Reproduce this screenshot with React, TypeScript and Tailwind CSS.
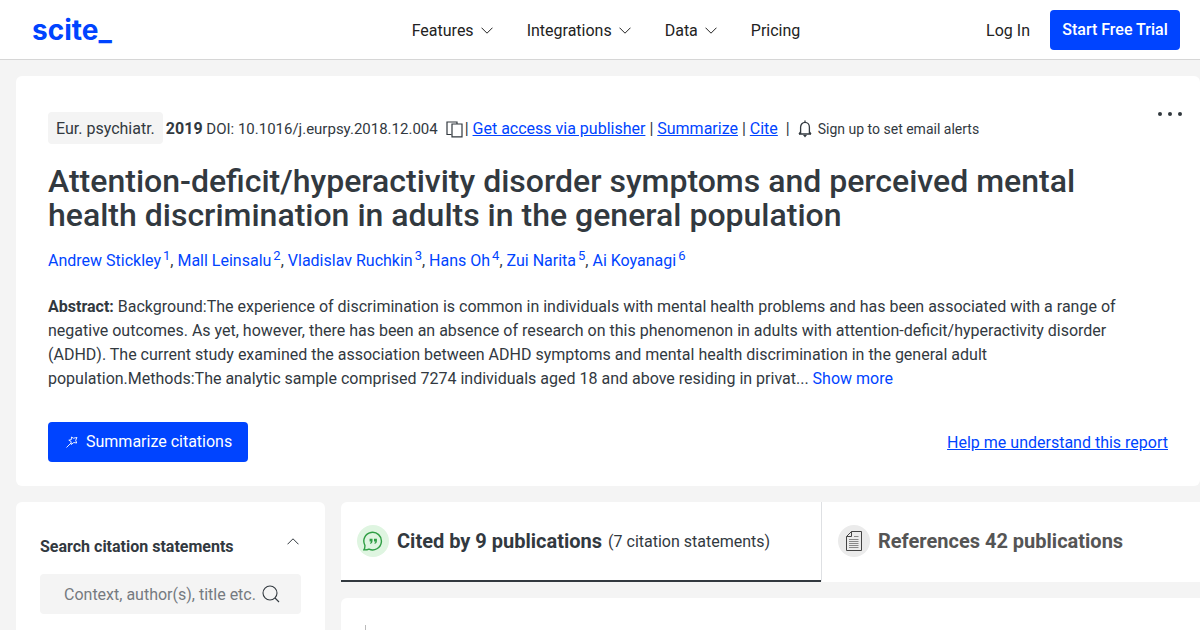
import React from 'react';

interface Author {
  name: string;
  affiliation: number;
}

const authors: Author[] = [
  { name: 'Andrew Stickley', affiliation: 1 },
  { name: 'Mall Leinsalu', affiliation: 2 },
  { name: 'Vladislav Ruchkin', affiliation: 3 },
  { name: 'Hans Oh', affiliation: 4 },
  { name: 'Zui Narita', affiliation: 5 },
  { name: 'Ai Koyanagi', affiliation: 6 },
];

const menus = ['Features', 'Integrations', 'Data'];

const Chevron: React.FC<{ up?: boolean }> = ({ up }) => (
  <svg width="12" height="7" viewBox="0 0 12 7" fill="none" stroke="currentColor" strokeWidth="1">
    <path d={up ? 'M0.5 6.3 6 0.8l5.5 5.5' : 'M0.5 0.7 6 6.2l5.5-5.5'} />
  </svg>
);

const Header: React.FC = () => (
  <header className="flex items-center justify-between h-[60px] pl-8 pr-5 bg-white border-b border-[#d6d6d6] text-[#222]">
    <a href="#" className="flex-1 font-['Inter'] font-bold text-[28px] leading-8 text-[#0044ff]">scite_</a>
    <nav className="flex items-center gap-[34px] pt-0.5">
      {menus.map(menu => (
        <button key={menu} className="flex items-center gap-[7px]">
          {menu}
          <Chevron />
        </button>
      ))}
      <a href="#">Pricing</a>
    </nav>
    <div className="flex flex-1 items-center justify-end gap-5">
      <a href="#" className="pt-0.5">Log In</a>
      <button className="h-10 w-[130px] rounded bg-[#0044ff] text-white font-medium">Start Free Trial</button>
    </div>
  </header>
);

const CopyIcon = () => (
  <svg width="17" height="17" viewBox="0 0 17 17" fill="none" stroke="currentColor" strokeWidth="1.2">
    <path d="M5.5 13.5H1V1h10v2" />
    <path d="M6 3h10v12.9H6z" />
  </svg>
);

const BellIcon = () => (
  <svg width="14" height="18" viewBox="0 0 14 18" fill="none" stroke="currentColor" strokeWidth="1.3">
    <path d="M1 14h12M2.6 14V7.2C2.6 4.5 4.5 2.3 7 2.3s4.4 2.2 4.4 4.9V14M7 .5v1.8" />
    <path d="M5 15h4L7 17.5z" fill="currentColor" stroke="none" />
    <path d="M1 14l1.6-2M13 14l-1.6-2" />
  </svg>
);

const WandIcon = () => (
  <svg width="12" height="12" viewBox="0 0 12 12" fill="none" stroke="currentColor" strokeWidth="0.9">
    <path d="M.5 11.5 5 7M5.500 1l1.800 1.200L11 1.500 9.700 4.300l1 2.700-2.900-.5L5.200 8.500l-.1-3L2.800 4.200l2.500-.6z" />
  </svg>
);

const CitedIcon = () => (
  <svg width="20" height="20" viewBox="0 0 20 20" fill="none" stroke="#2f9e44" strokeWidth="1.4">
    <path d="M.8 18.9C1.800 18 2 16.300 1.900 14.300A8.800 8.800 0 1 1 6 18.100c-1.500.7-3.300.9-5.200.8z" />
    <path d="M6.600 7.700h2.900v2.200c0 1.500-.8 2.500-2.300 3v-1.200c.6-.3.9-.7.900-1.300H6.600zM11 7.700h2.900v2.200c0 1.500-.8 2.500-2.300 3v-1.200c.6-.3.9-.7.900-1.300H11z" fill="#2f9e44" stroke="none" />
  </svg>
);

const DocumentIcon = () => (
  <svg width="16" height="20" viewBox="0 0 16 20" fill="none" stroke="#444" strokeWidth="1">
    <path d="M5.500.5h10v19H.5V5.500zM5.500.5v5h-5" />
    <path d="M8 5.500h4.500M3 8.500h9.500M3 10.500h9.500M3 12.500h9.500M3 14.500h9.500M3 16.500h9.500" stroke="#888" />
  </svg>
);

const Report: React.FC = () => (
  <section className="bg-white rounded-md pt-9 px-8 pb-6">
    <div className="flex items-start justify-between">
      <div className="flex items-center h-8 whitespace-pre">
        <span className="h-8 px-2 mr-[3px] leading-[34px] rounded bg-[#f4f4f4]">Eur. psychiatr.</span>
        <div className="flex items-center pt-0.5">
          <strong>2019</strong>
          <span className="text-[15px]"> DOI: 10.1016/j.eurpsy.2018.12.004</span>
          <button aria-label="Copy DOI" className="ml-2 mr-0.5"><CopyIcon /></button>
          <span>| </span>
          <a href="#" className="text-[#0044ff] underline">Get access via publisher</a>
          <span> | </span>
          <a href="#" className="text-[#0044ff] underline">Summarize</a>
          <span> | </span>
          <a href="#" className="text-[#0044ff] underline">Cite</a>
          <span className="mx-2">|</span>
          <button className="flex items-center gap-1.5 text-sm">
            <BellIcon />
            Sign up to set email alerts
          </button>
        </div>
      </div>
      <button aria-label="More" className="-mr-4 h-1">
        <svg width="26" height="4" viewBox="0 0 26 4" fill="currentColor">
          <circle cx="2" cy="2" r="2" />
          <circle cx="12" cy="2" r="2" />
          <circle cx="22" cy="2" r="2" />
        </svg>
      </button>
    </div>

    <h1 className="mt-5 text-[32px] leading-[34px] font-medium">
      Attention-deficit/hyperactivity disorder symptoms and perceived mental health discrimination in adults in the general population
    </h1>

    <p className="mt-[17px] leading-6">
      {authors.map((author, i) => (
        <React.Fragment key={author.name}>
          {i > 0 && ', '}
          <a href="#" className="text-[#0044ff]">
            {author.name}
            <sup className="ml-0.5 text-[13px]">{author.affiliation}</sup>
          </a>
        </React.Fragment>
      ))}
    </p>

    <p className="mt-[22px] pr-4 leading-6">
      <strong>Abstract:</strong> Background:The experience of discrimination is common in individuals with mental health problems and has been associated with a range of negative outcomes. As yet, however, there has been an absence of research on this phenomenon in adults with attention-deficit/hyperactivity disorder (ADHD). The current study examined the association between ADHD symptoms and mental health discrimination in the general adult population.Methods:The analytic sample comprised 7274 individuals aged 18 and above residing in privat... <button className="text-[#0044ff]">Show more</button>
    </p>

    <div className="mt-[31px] flex items-center justify-between">
      <button className="flex items-center gap-2 h-10 pl-[18px] pr-4 rounded bg-[#0044ff] text-white">
        <WandIcon />
        Summarize citations
      </button>
      <a href="#" className="pt-0.5 text-[#0044ff] underline">Help me understand this report</a>
    </div>
  </section>
);

const SearchPanel: React.FC = () => (
  <aside className="w-[309px] shrink-0 bg-white rounded-md px-6 pt-[33px] pb-6">
    <div className="flex items-start justify-between pr-0.5">
      <label htmlFor="search" className="leading-6 font-bold">Search citation statements</label>
      <button aria-label="Collapse" className="h-3"><Chevron up /></button>
    </div>
    <div className="mt-[15px] flex items-center h-10 pl-6 pr-[21px] rounded bg-[#f4f4f4]">
      <input
        id="search"
        type="text"
        placeholder="Context, author(s), title etc."
        className="flex-1 min-w-0 pt-0.5 bg-transparent outline-none placeholder:text-[#757a80]"
      />
      <svg width="18" height="18" viewBox="0 0 18 18" fill="none" stroke="currentColor" strokeWidth="1.1">
        <circle cx="8" cy="8" r="7" />
        <path d="m13 13 4 4" />
      </svg>
    </div>
  </aside>
);

const App: React.FC = () => (
  <div className="h-screen overflow-hidden bg-[#f4f4f4] font-['Roboto',sans-serif] text-base text-[#32393f]">
    <Header />
    <main className="pl-4 pt-4 flex flex-col gap-4">
      <Report />
      <div className="flex gap-4">
        <SearchPanel />
        <div className="flex-1 min-w-0">
          <div className="flex rounded-tl-md overflow-hidden bg-white">
            <button className="flex items-center shrink-0 w-[480px] h-20 px-4 border-b-2 border-[#32393f]">
              <span className="flex items-center justify-center size-8 mr-2 rounded-full bg-[#dff5e1]"><CitedIcon /></span>
              <span className="text-xl font-bold mr-1.5">Cited by 9 publications</span>
              <span className="pt-0.5">(7 citation statements)</span>
            </button>
            <button className="flex items-center shrink-0 w-[480px] h-20 px-4 border-l border-b-2 border-l-[#dee0e3] border-b-white text-[#555]">
              <span className="flex items-center justify-center size-8 mr-2 rounded-full bg-[#ebebeb]"><DocumentIcon /></span>
              <span className="text-xl font-bold">References 42 publications</span>
            </button>
          </div>
          <div className="mt-4 h-24 rounded-tl-md bg-white pl-6 pt-[27px]">
            <div className="h-full border-l border-[#bbb]" />
          </div>
        </div>
      </div>
    </main>
  </div>
);

export default App;
